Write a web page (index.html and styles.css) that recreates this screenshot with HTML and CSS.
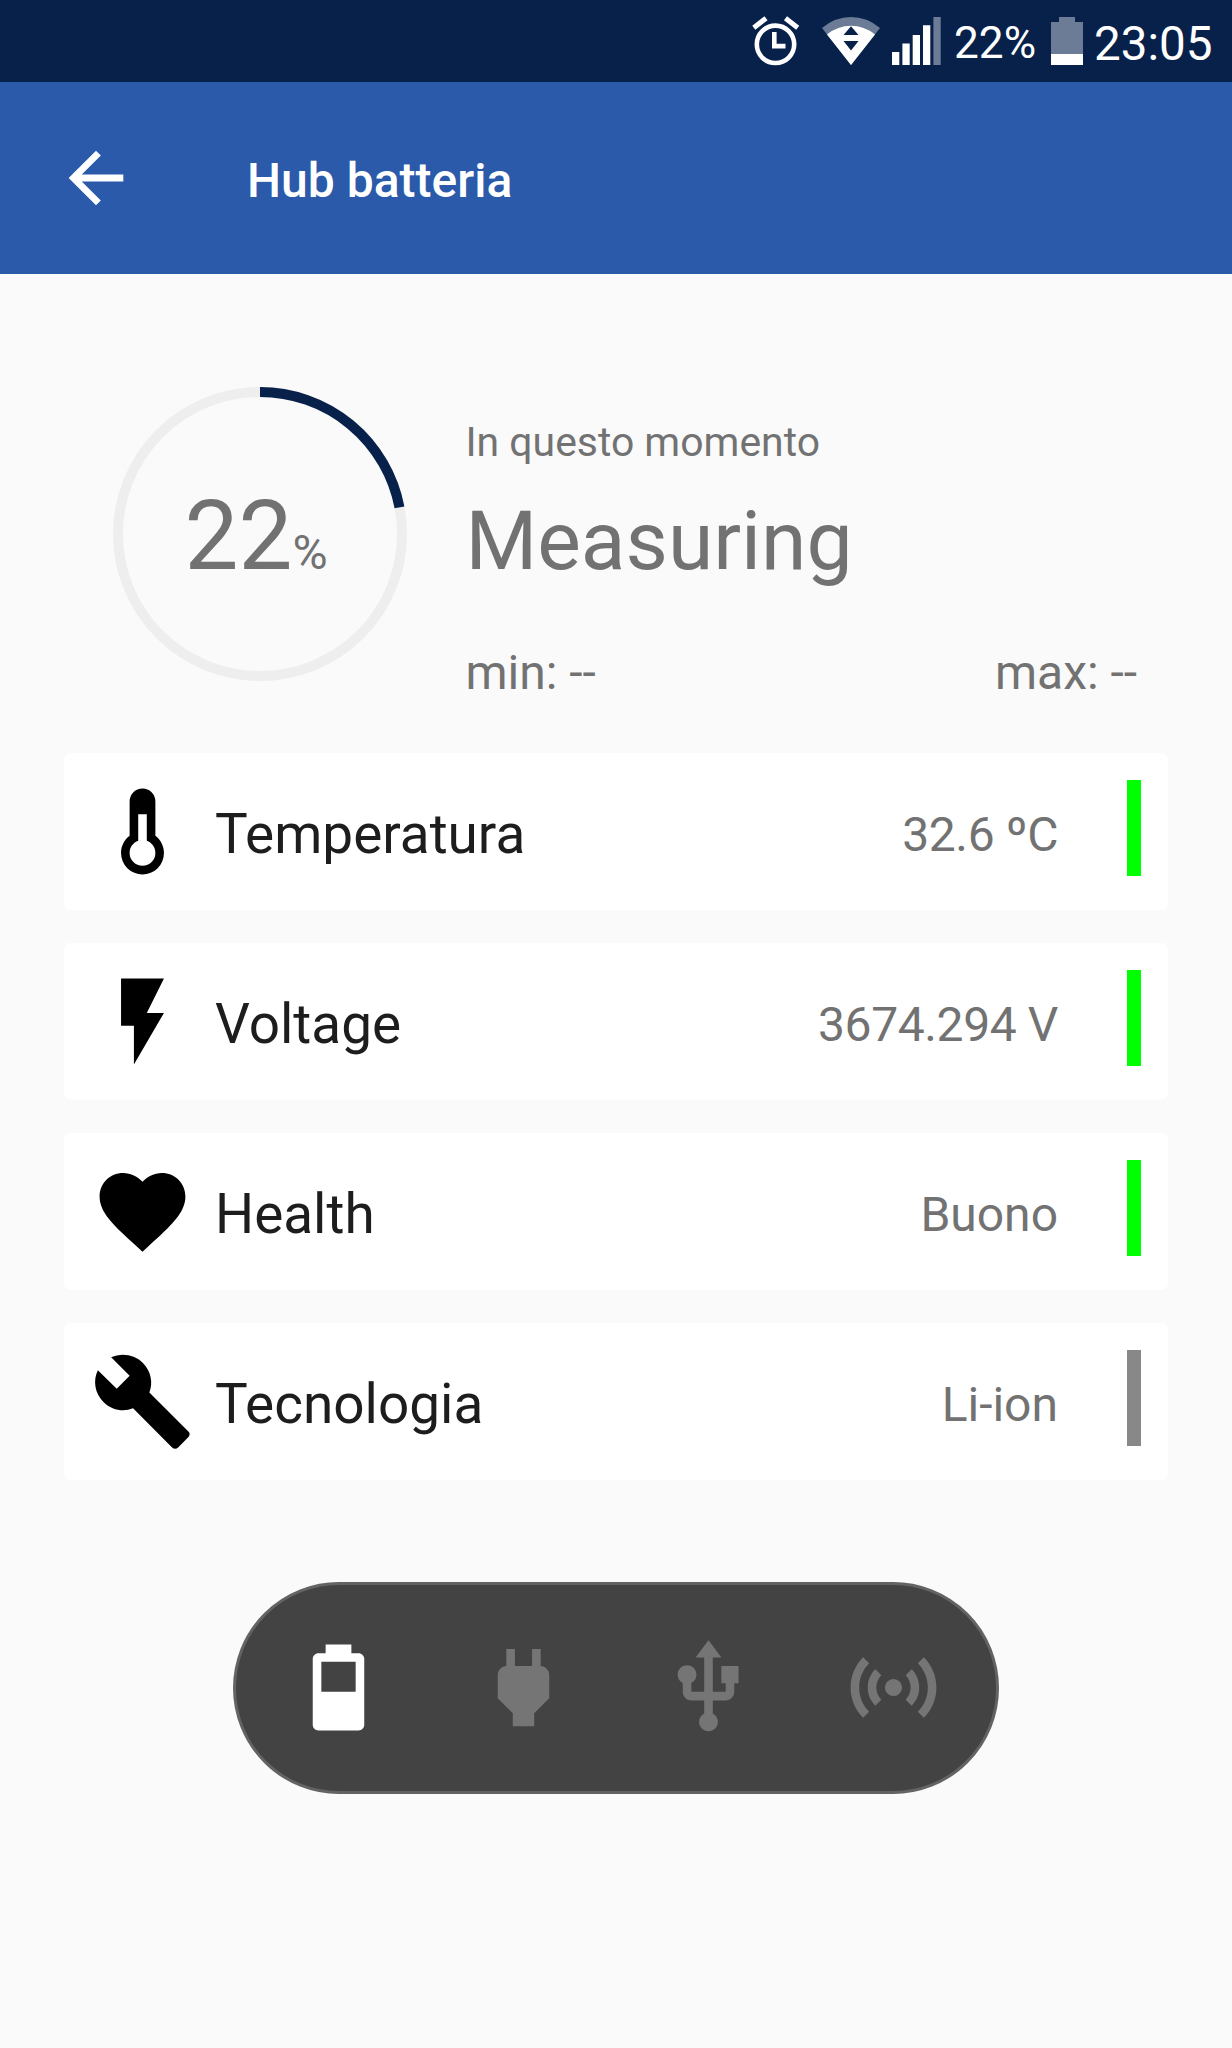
FILE: index.html
```html
<!DOCTYPE html>
<html lang="it">
<head>
  <meta charset="UTF-8">
  <title>Hub batteria</title>
  <link rel="stylesheet" href="styles.css">
</head>
<body>

  <div class="status-bar">
    <svg class="status-alarm" viewBox="0 0 48 50">
      <circle cx="23.5" cy="28.3" r="18.7" fill="none" stroke="#fff" stroke-width="4.6"/>
      <path d="M22.3 16v14.1h11.2" fill="none" stroke="#fff" stroke-width="4.6"/>
      <path d="M1.8 11.8L14 2.2M45.7 11.8L33.5 2.2" fill="none" stroke="#fff" stroke-width="5"/>
    </svg>
    <svg class="status-wifi" viewBox="0 0 58 48">
      <path d="M29 48L0 11Q13 0 29 0t29 11z" fill="#6c7b96"/>
      <path d="M29 48L5 17.4Q16 8.8 29 8.8t24 8.6z" fill="#fff"/>
      <path d="M29 9.3l7.5 8.6h-15zM21.5 24h15L29 33.5z" fill="#08214a"/>
    </svg>
    <svg class="status-signal" viewBox="0 0 49 48">
      <path d="M0 35h7.3v13H0zM10.4 26.6h7.3V48h-7.3zM20.7 18H28v30h-7.3zM31 8.3h7.3V48H31z" fill="#fff"/>
      <path d="M41.4 0h7.3v48h-7.3z" fill="#6c7b96"/>
    </svg>
    <span class="status-percent">22%</span>
    <svg class="status-battery" viewBox="0 0 32 48">
      <path d="M8 0h16v5h8v32H0V5h8z" fill="#6c7b96"/>
      <path d="M0 37h32v11H0z" fill="#fff"/>
    </svg>
    <span class="status-time">23:05</span>
  </div>

  <header>
    <svg class="back-icon" viewBox="0 0 24 24"><path d="M20 11H7.83l5.59-5.59L12 4l-8 8 8 8 1.41-1.41L7.83 13H20v-2z"/></svg>
    <h1>Hub batteria</h1>
  </header>

  <main>
    <section class="summary">
      <div class="gauge">
        <svg viewBox="0 0 294 294">
          <circle class="gauge-track" cx="147" cy="147" r="142"/>
          <circle class="gauge-fill" cx="147" cy="147" r="142" pathLength="100" stroke-dasharray="22 100" transform="rotate(-90 147 147)"/>
        </svg>
        <div class="gauge-value">22<small>%</small></div>
      </div>
      <div class="current">
        <div class="current-label">In questo momento</div>
        <div class="current-value">Measuring</div>
        <div class="current-range"><span>min: --</span><span>max: --</span></div>
      </div>
    </section>

    <section class="cards">
      <div class="card">
        <svg class="card-icon" viewBox="0 0 24 24"><path d="M17 17a5 5 0 0 1-10 0c0-1.64.79-3.09 2-4V5a3 3 0 0 1 6 0v8c1.21.91 2 2.36 2 4zM11 8v6.17c-1.17.41-2 1.52-2 2.83a3 3 0 0 0 6 0c0-1.31-.83-2.42-2-2.83V8h-2z"/></svg>
        <span class="card-label">Temperatura</span>
        <span class="card-value numeric">32.6 ºC</span>
        <span class="card-state good"></span>
      </div>
      <div class="card">
        <svg class="card-icon" viewBox="0 0 24 24"><path d="M7 2v11h3v9l7-12h-4l4-8z"/></svg>
        <span class="card-label">Voltage</span>
        <span class="card-value numeric">3674.294 V</span>
        <span class="card-state good"></span>
      </div>
      <div class="card">
        <svg class="card-icon" viewBox="0 0 24 24"><path d="M12 21.35l-1.45-1.32C5.4 15.36 2 12.28 2 8.5 2 5.42 4.42 3 7.5 3c1.74 0 3.41.81 4.5 2.09C13.09 3.81 14.76 3 16.5 3 19.58 3 22 5.42 22 8.5c0 3.78-3.4 6.86-8.55 11.54L12 21.35z"/></svg>
        <span class="card-label">Health</span>
        <span class="card-value">Buono</span>
        <span class="card-state good"></span>
      </div>
      <div class="card">
        <svg class="card-icon" viewBox="0 0 24 24"><path d="M22.7 19l-9.1-9.1c.9-2.3.4-5-1.5-6.9-2-2-5-2.4-7.4-1.3L9 6 6 9 1.6 4.7C.4 7.1.9 10.1 2.9 12.1c1.9 1.9 4.6 2.4 6.9 1.5l9.1 9.1c.4.4 1 .4 1.4 0l2.3-2.3c.5-.4.5-1.1.1-1.4z"/></svg>
        <span class="card-label">Tecnologia</span>
        <span class="card-value">Li-ion</span>
        <span class="card-state"></span>
      </div>
    </section>

    <nav class="sources">
      <svg class="source-icon active" viewBox="0 0 24 24"><path d="M16 13H8V6h8v7zM16.67 4H15V2H9v2H7.33C6.6 4 6 4.6 6 5.33v15.34C6 21.4 6.6 22 7.33 22h9.34c.73 0 1.33-.6 1.33-1.33V5.33C18 4.6 17.4 4 16.67 4z"/></svg>
      <svg class="source-icon" viewBox="0 0 24 24"><path d="M16 7V3h-2v4h-4V3H8v4C7 7 6 8 6 9v5.5L9.5 18v3h5v-3l3.5-3.5V9c0-1-1-2-2-2z"/></svg>
      <svg class="source-icon" viewBox="0 0 24 24"><path d="M15 7v4h1v2h-3V5h2l-3-4-3 4h2v8H8v-2.07c.7-.37 1.2-1.08 1.2-1.93 0-1.21-.99-2.2-2.2-2.2-1.21 0-2.2.99-2.2 2.2 0 .85.5 1.56 1.2 1.93V13c0 1.11.89 2 2 2h3v3.05c-.71.37-1.2 1.1-1.2 1.95 0 1.22.99 2.2 2.2 2.2 1.21 0 2.2-.98 2.2-2.2 0-.85-.49-1.58-1.2-1.95V15h3c1.11 0 2-.89 2-2v-2h1V7h-4z"/></svg>
      <svg class="source-icon" viewBox="0 0 24 24"><path d="M4.93 4.93C3.12 6.74 2 9.24 2 12s1.12 5.26 2.93 7.07l1.41-1.41C4.89 16.22 4 14.22 4 12s.89-4.22 2.34-5.66L4.93 4.93zM19.07 4.93l-1.41 1.41C19.11 7.78 20 9.79 20 12s-.89 4.22-2.34 5.66l1.41 1.41C20.88 17.26 22 14.76 22 12s-1.12-5.26-2.93-7.07zM7.76 7.76C6.67 8.85 6 10.35 6 12s.67 3.15 1.76 4.24l1.41-1.41C8.45 14.11 8 13.11 8 12s.45-2.11 1.17-2.83L7.76 7.76zM16.24 7.76l-1.41 1.41C15.55 9.89 16 10.89 16 12s-.45 2.11-1.17 2.83l1.41 1.41C17.33 15.15 18 13.65 18 12s-.67-3.15-1.76-4.24zM12 10a2 2 0 1 0 0 4 2 2 0 0 0 0-4z"/></svg>
    </nav>
  </main>

</body>
</html>
```
FILE: styles.css
```css
* { box-sizing: border-box; }
body {
  margin: 0;
  min-height: 100vh;
  font-family: Roboto, sans-serif;
  background: #fafafa;
  color: #727272;
}
svg { display: block; flex-shrink: 0; }

.status-bar {
  height: 82px; padding-right: 19px;
  display: flex; align-items: flex-start;
  justify-content: flex-end;
  background: #08214a; color: #fff;
}
.status-alarm { width: 48px; height: 50px; margin: 16px 22px 0 0; }
.status-wifi { width: 58px; height: 48px; margin: 17px 12px 0 0; }
.status-signal { width: 49px; height: 48px; margin: 17px 13px 0 0; }
.status-percent {
  width: 97px;
  font-size: 44.2px; line-height: 86px;
}
.status-battery { width: 32px; height: 48px; margin: 17px 11px 0 0; }
.status-time {
  width: 119px;
  font-size: 47.6px; line-height: 88px;
}

header {
  height: 192px; padding-left: 55px;
  display: flex; align-items: center;
  background: #2a5aa9; color: #fff;
}
.back-icon { width: 82px; height: 82px; fill: #fff; }
h1 {
  margin: 5px 0 0 110px;
  font-size: 48px; font-weight: 500; line-height: 56px;
}

.summary {
  display: flex; align-items: flex-start;
  padding: 113px 95px 0 113px;
}
.gauge {
  width: 294px; height: 294px;
  display: grid; place-items: center;
}
.gauge > * { grid-area: 1 / 1; }
.gauge svg { width: 294px; height: 294px; }
.gauge circle { fill: none; stroke-width: 10; }
.gauge .gauge-track { stroke: #eee; }
.gauge .gauge-fill { stroke: #08214a; }
.gauge-value {
  padding: 21px 8px 0 0;
  font-size: 96px; line-height: 112px;
}
.gauge-value small { font-size: 48px; }

.current { flex: 1; margin: 31px 0 0 58.5px; }
.current-label { font-size: 40.9px; line-height: 48px; }
.current-value { margin-top: 27px; font-size: 82.2px; line-height: 96px; }
.current-range {
  display: flex; justify-content: space-between;
  margin-top: 56px;
  font-size: 48px; line-height: 56px;
}

.cards {
  display: flex; flex-direction: column; gap: 32.8px;
  padding: 0 64px; margin-top: 52px;
}
.card {
  height: 157.2px; padding: 0 27px;
  display: flex; align-items: center;
  background: #fff; border-radius: 7px;
}
.card-icon { width: 103px; height: 103px; fill: #000; }
.card-label {
  flex: 1; margin: 4px 0 0 21px;
  color: #1d1d1d;
  font-size: 54.9px; line-height: 64px;
}
.card-value { margin: 6.5px 69px 0 0; font-size: 48px; line-height: 56px; }
.card-value.numeric { letter-spacing: -.4px; }
.card-state {
  width: 14px; height: 96px; margin-bottom: 7px;
  background: #888;
}
.card-state.good { background: #0f0; }

.sources {
  width: 766px; height: 212.5px; margin: 101.5px auto 0;
  display: flex; align-items: center; justify-content: center;
  gap: 82px;
  background: #434343; border: 3px solid #636363;
  border-radius: 107px;
}
.source-icon { width: 103px; height: 103px; fill: #757575; }
.source-icon.active { fill: #fff; }
```
